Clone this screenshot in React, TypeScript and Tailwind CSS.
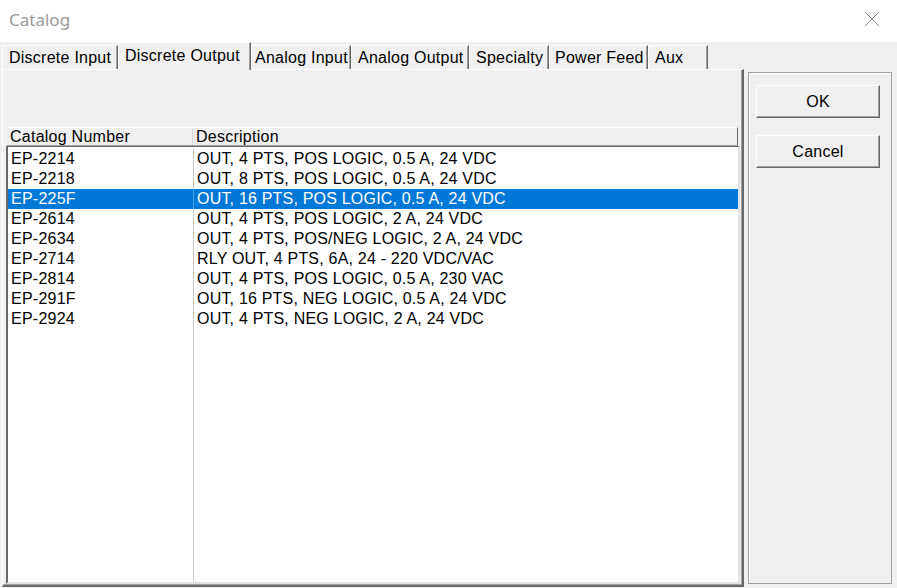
import React from "react";

const rows = [
  ["EP-2214", "OUT, 4 PTS, POS LOGIC, 0.5 A, 24 VDC"],
  ["EP-2218", "OUT, 8 PTS, POS LOGIC, 0.5 A, 24 VDC"],
  ["EP-225F", "OUT, 16 PTS, POS LOGIC, 0.5 A, 24 VDC"],
  ["EP-2614", "OUT, 4 PTS, POS LOGIC, 2 A, 24 VDC"],
  ["EP-2634", "OUT, 4 PTS, POS/NEG LOGIC, 2 A, 24 VDC"],
  ["EP-2714", "RLY OUT, 4 PTS, 6A, 24 - 220 VDC/VAC"],
  ["EP-2814", "OUT, 4 PTS, POS LOGIC, 0.5 A, 230 VAC"],
  ["EP-291F", "OUT, 16 PTS, NEG LOGIC, 0.5 A, 24 VDC"],
  ["EP-2924", "OUT, 4 PTS, NEG LOGIC, 2 A, 24 VDC"],
];

const tabs = [
  { label: "Discrete Input", w: "w-[116px]", pl: "pl-[6px]" },
  { label: "Discrete Output", w: "w-[133px]", pl: "pl-[6px]", active: true },
  { label: "Analog Input", w: "w-[100px]", pl: "pl-[3px]" },
  { label: "Analog Output", w: "w-[118px]", pl: "pl-[6px]" },
  { label: "Specialty", w: "w-[80px]", pl: "pl-[6px]" },
  { label: "Power Feed", w: "w-[99px]", pl: "pl-[5px]" },
  { label: "Aux", w: "w-[60px]", pl: "pl-[6px]" },
];

const selected = 2;

function Button({ label }: { label: string }) {
  return (
    <button className="w-[124px] h-[33px] pt-[1px] bg-[#f0f0f0] border border-t-white border-l-white border-r-[#696969] border-b-[#696969] shadow-[inset_-1px_-1px_0_#a0a0a0] text-[16px] tracking-[0.25px] text-black leading-none">
      {label}
    </button>
  );
}

export default function App() {
  return (
    <div
      className="w-[897px] h-[588px] flex flex-col bg-[#f0f0f0] overflow-hidden text-black"
      style={{ fontFamily: '"Liberation Sans", Arial, sans-serif' }}
    >
      {/* Title bar */}
      <div className="h-[42px] bg-white flex items-center justify-between pl-[9px] pr-[17px] shrink-0">
        <span
          className="text-[17px] text-[#999999] -mt-[2px]"
          style={{ fontFamily: '"Noto Sans", "Open Sans", sans-serif' }}
        >
          Catalog
        </span>
        <svg width="16" height="16" viewBox="0 0 16 16" className="-mt-[4px]">
          <path d="M1 1 L15 15 M15 1 L1 15" stroke="#8a8a8a" strokeWidth="1" fill="none" />
        </svg>
      </div>

      {/* Body */}
      <div className="flex flex-1 pl-[2px] text-[16px] tracking-[0.25px]">
        {/* Tab control */}
        <div className="flex flex-col w-[742px]">
          <div className="flex items-end h-[27px] relative z-10">
            {tabs.map((t) =>
              t.active ? (
                <div
                  key={t.label}
                  className={`${t.w} ${t.pl} h-[28px] -mb-[1px] bg-[#f0f0f0] border-t border-l border-r border-t-white border-l-white border-r-[#696969] shadow-[inset_-1px_0_0_#a0a0a0] pt-[3px] leading-[20px] whitespace-nowrap`}
                >
                  {t.label}
                </div>
              ) : (
                <div
                  key={t.label}
                  className={`${t.w} ${t.pl} h-[24px] bg-[#f0f0f0] border-t border-l border-r border-t-white border-l-white border-r-[#696969] shadow-[inset_-1px_0_0_#a0a0a0] pt-[2px] leading-[20px] whitespace-nowrap overflow-hidden`}
                >
                  {t.label}
                </div>
              )
            )}
          </div>

          {/* Tab panel */}
          <div className="h-[518px] flex flex-col border-t border-l border-r-2 border-b-2 border-t-white border-l-white border-r-[#696969] border-b-[#696969] shadow-[inset_-1px_-1px_0_#a0a0a0]">
            <div className="h-[57px] shrink-0" />

            {/* Column header */}
            <div className="ml-[4px] mr-[4px] h-[19px] flex border-t border-t-white border-b border-b-[#a0a0a0] border-r border-r-[#696969] leading-[18px] shrink-0 whitespace-nowrap">
              <div className="w-[186px] pl-[3px] border-r border-r-[#d8d8d8]">Catalog Number</div>
              <div className="flex-1 pl-[3px]">Description</div>
            </div>

            {/* List */}
            <div className="ml-[3px] mr-[2px] flex-1 mb-[1px] flex flex-col bg-white border-t border-t-[#696969] border-l-2 border-l-[#696969] border-r-2 border-r-[#e3e3e3] border-b-2 border-b-[#e3e3e3] pt-[2px]">
              {rows.map(([num, desc], i) => (
                <div
                  key={num}
                  className={`flex h-[20px] leading-[20px] whitespace-nowrap ${
                    i === selected ? "bg-[#0078d7] text-white" : ""
                  }`}
                >
                  <div
                    className={`w-[186px] pl-[3px] border-r ${
                      i === selected ? "border-r-[#4da0e3]" : "border-r-[#c8c8c8]"
                    }`}
                  >
                    {num}
                  </div>
                  <div className="flex-1 pl-[3px] tracking-[0.2px]">{desc}</div>
                </div>
              ))}
              <div className="flex-1 flex">
                <div className="w-[186px] border-r border-r-[#c8c8c8]" />
              </div>
            </div>
          </div>
        </div>

        {/* Right frame */}
        <div className="ml-[4px] mt-[30px] h-[512px] w-[144px] border border-[#a0a0a0] shadow-[inset_1px_1px_0_#ffffff] flex flex-col items-start pl-[7px] pt-[12px] gap-[17px]">
          <Button label="OK" />
          <Button label="Cancel" />
        </div>
      </div>
    </div>
  );
}
